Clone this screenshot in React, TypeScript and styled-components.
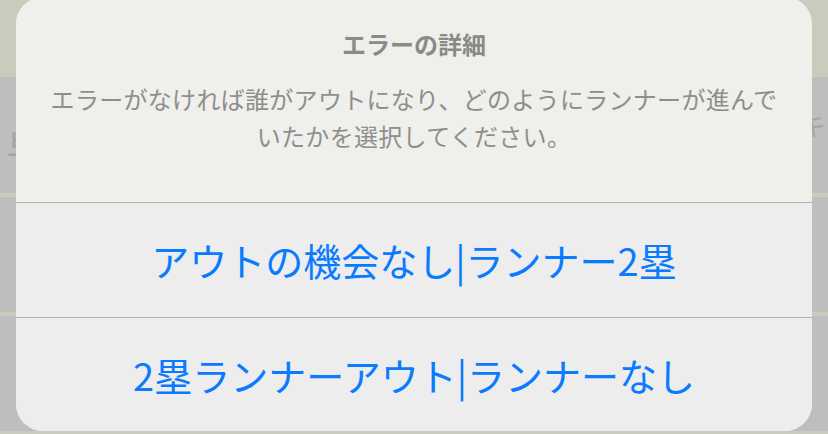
import React from "react";
import styled, { createGlobalStyle } from "styled-components";

const GlobalStyle = createGlobalStyle`
  html, body {
    margin: 0;
    padding: 0;
    background: #bebebe;
  }
  body {
    font-family: "Noto Sans CJK JP", "Noto Sans", sans-serif;
  }
`;

const options = [
  "アウトの機会なし|ランナー2塁",
  "2塁ランナーアウト|ランナーなし",
];

export default function App() {
  return (
    <>
      <GlobalStyle />
      <Screen>
        <Backdrop>
          <TopBar />
          <ListRow $height={116}>
            <FaintLabel>早</FaintLabel>
            <FaintTail>キ</FaintTail>
          </ListRow>
          <RowSeparator />
          <ListRow $height={115} />
          <RowSeparator />
          <ListRow $height={115} />
          <RowSeparator />
        </Backdrop>

        <Sheet>
          <Header>
            <Title>エラーの詳細</Title>
            <Message>
              エラーがなければ誰がアウトになり、どのようにランナーが進んでいたかを選択してください。
            </Message>
          </Header>
          {options.map((label) => (
            <ActionButton key={label}>{label}</ActionButton>
          ))}
        </Sheet>
      </Screen>
    </>
  );
}

const Screen = styled.div`
  position: relative;
  width: 828px;
  height: 434px;
  overflow: hidden;
`;

const Backdrop = styled.div`
  display: flex;
  flex-direction: column;
  height: 100%;
`;

const TopBar = styled.div`
  height: 77px;
  flex-shrink: 0;
  background: #cbcbbd;
`;

const ListRow = styled.div<{ $height: number }>`
  height: ${(p) => p.$height}px;
  flex-shrink: 0;
  background: #bebebe;
  display: flex;
  align-items: center;
  justify-content: space-between;
  padding: 0 0 0 7px;
`;

const FaintLabel = styled.span`
  font-size: 36px;
  color: #a4a4a4;
  margin-top: 22px;
`;

const FaintTail = styled.span`
  font-size: 28px;
  color: #a6a6a6;
  margin-right: 2px;
  margin-top: -22px;
`;

const RowSeparator = styled.div`
  height: 4px;
  flex-shrink: 0;
  background: #cbcbbd;
`;

const Sheet = styled.div`
  position: absolute;
  left: 16px;
  right: 16px;
  top: -3px;
  bottom: 3px;
  border-radius: 27px;
  overflow: hidden;
  display: flex;
  flex-direction: column;
  background: #ededed;
`;

const Header = styled.div`
  height: 205px;
  box-sizing: border-box;
  padding: 32px 30px 0;
  background: #efefeb;
  display: flex;
  flex-direction: column;
  align-items: center;
  gap: 21px;
  flex-shrink: 0;
`;

const Title = styled.div`
  font-size: 24px;
  line-height: 30px;
  font-weight: 700;
  color: #8a8a86;
  text-align: center;
`;

const Message = styled.div`
  font-size: 24px;
  line-height: 37px;
  letter-spacing: 0.3px;
  color: #8e8e8c;
  text-align: center;
`;

const ActionButton = styled.button`
  flex: 1;
  border: none;
  border-top: 1.5px solid #b2b2b2;
  background: #ededed;
  color: #0a7aff;
  font-family: "Noto Sans CJK JP", "Noto Sans", sans-serif;
  font-size: 38px;
  padding: 0;
  cursor: pointer;
`;
